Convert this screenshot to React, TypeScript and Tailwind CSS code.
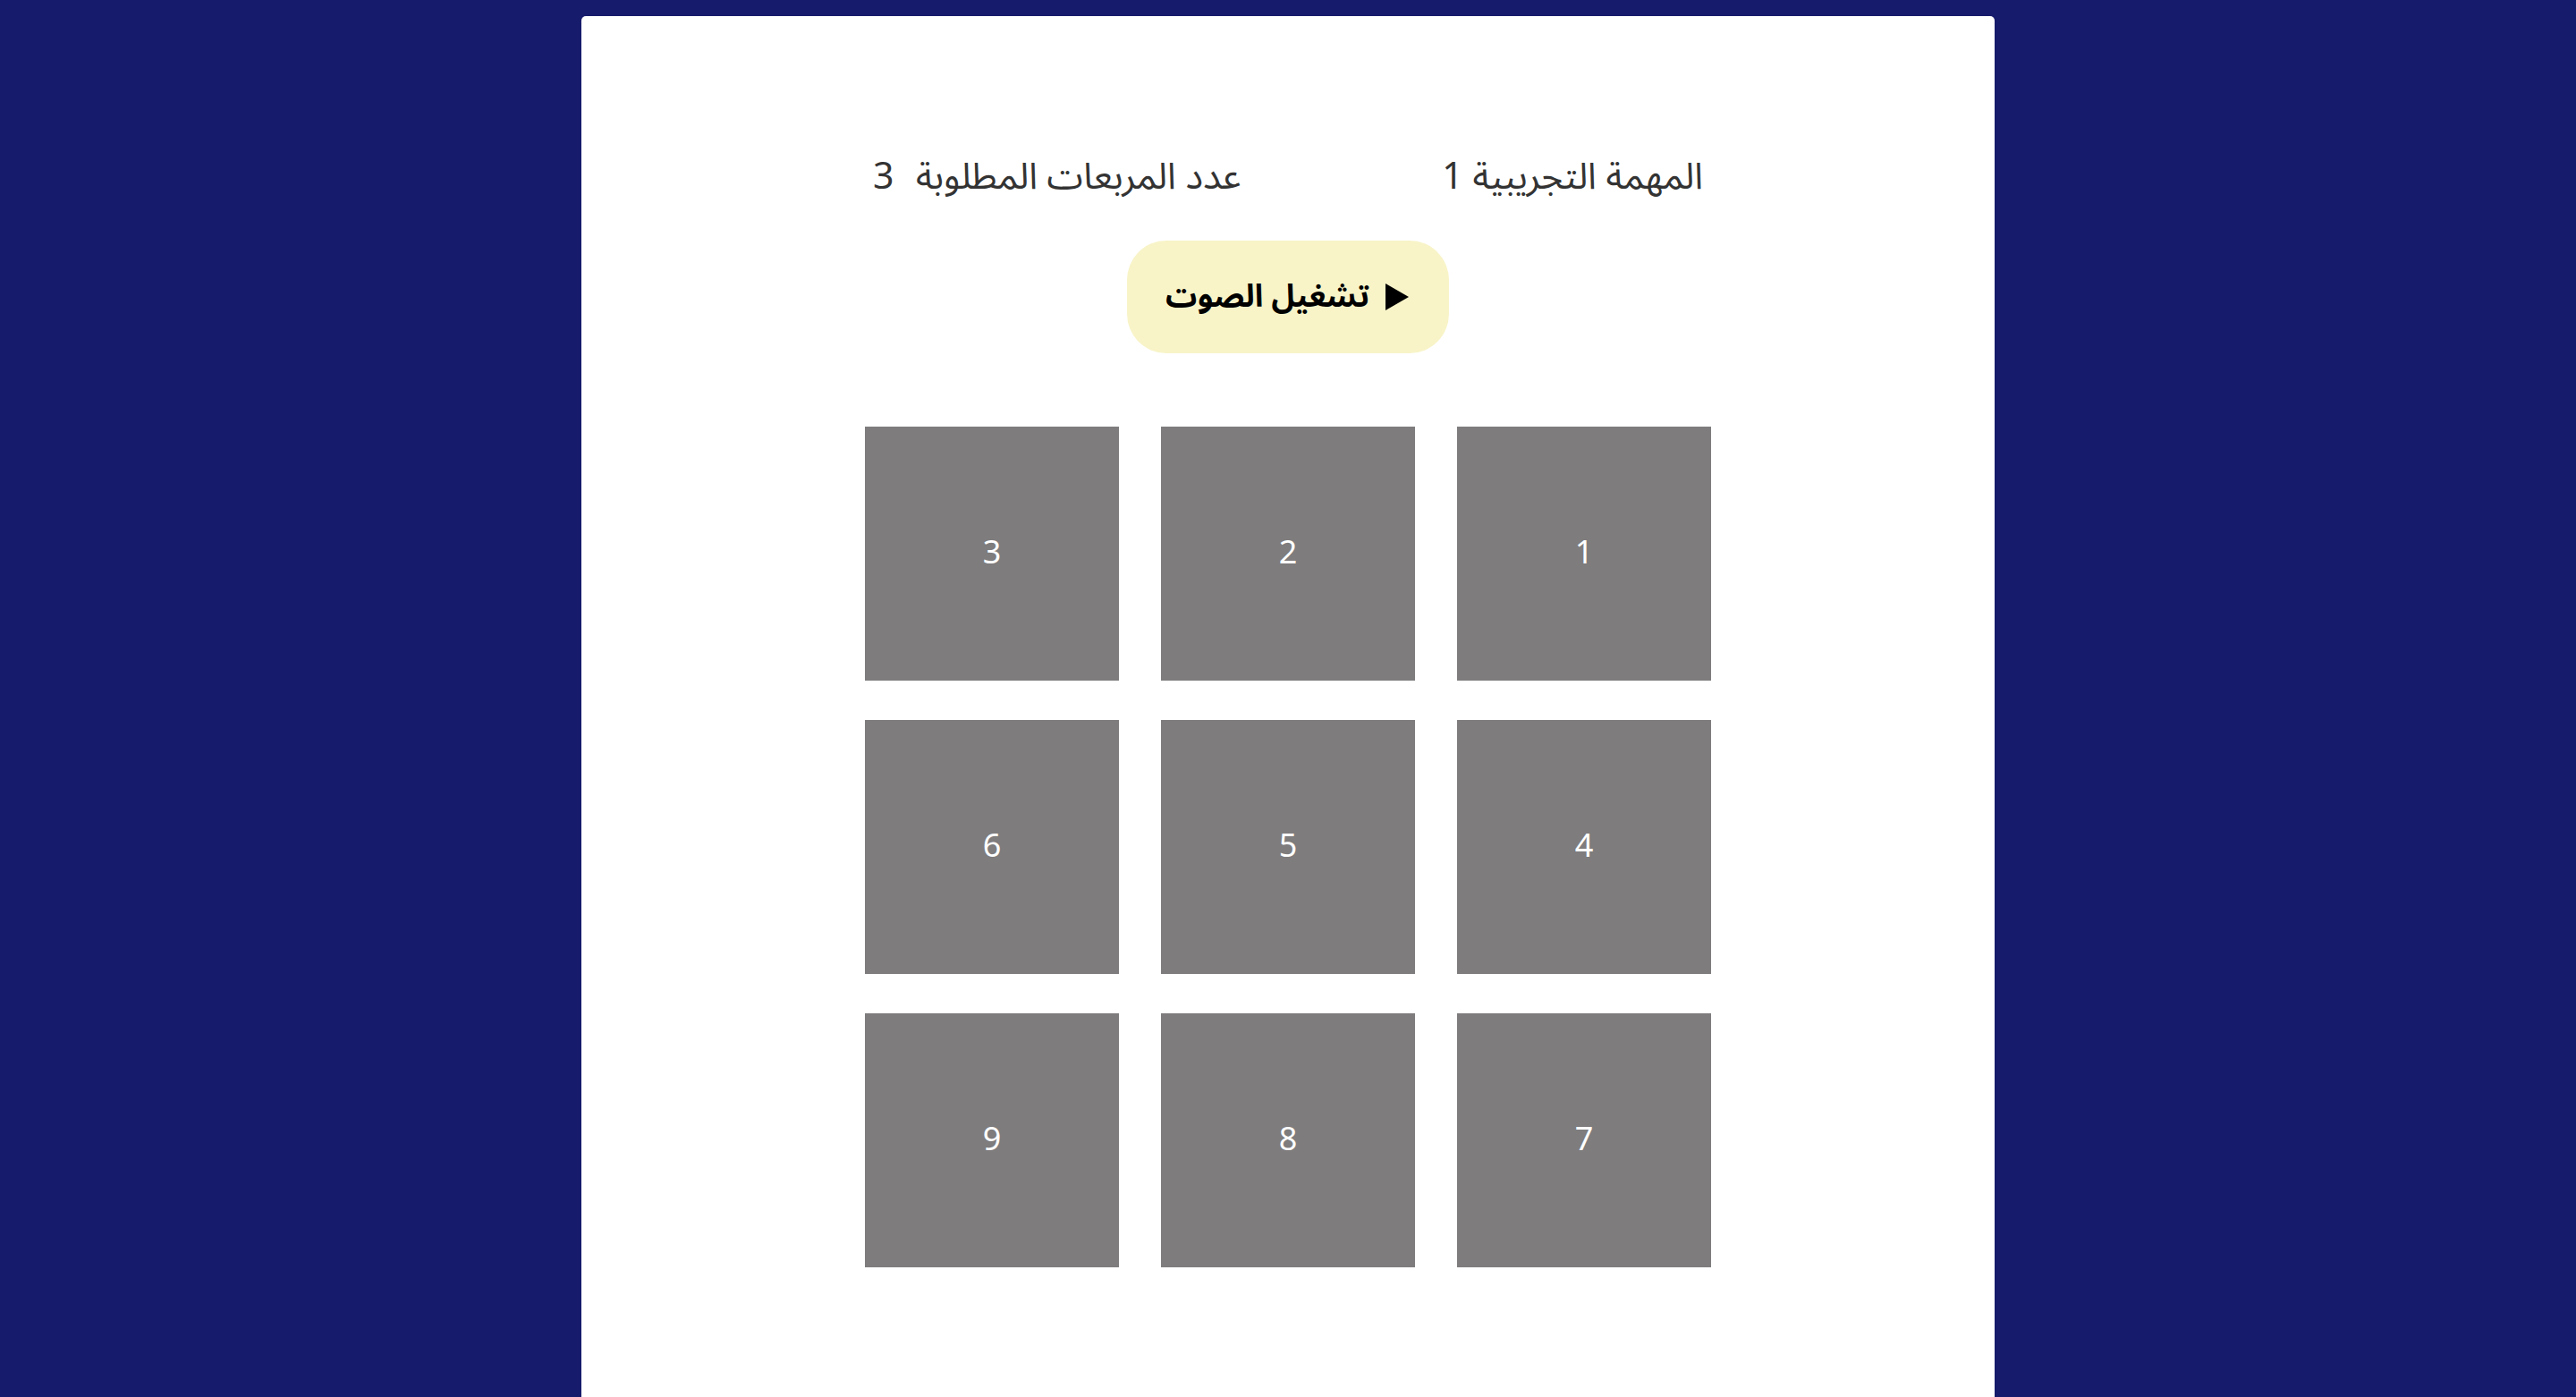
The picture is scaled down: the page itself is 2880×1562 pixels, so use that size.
import React from "react";

const squares = [1, 2, 3, 4, 5, 6, 7, 8, 9];

export default function App() {
    return (
        <div
            dir="rtl"
            className="h-screen overflow-hidden bg-[#171b6b] flex justify-center pt-[18px]"
            style={{ fontFamily: '"Noto Sans Arabic", "Noto Sans", "DejaVu Sans", sans-serif' }}
        >
            <div className="w-[1580px] bg-white rounded-t-[5px] flex flex-col items-center pt-[160px]">
                {/* Header */}
                <div className="w-[928px] flex justify-between items-center text-[41px] leading-none text-[#333333]">
                    <span>المهمة التجريبية 1</span>
                    <span>
                        عدد المربعات المطلوبة <span className="mr-[14px]">3</span>
                    </span>
                </div>

                {/* Play button */}
                <button className="mt-[50px] w-[360px] h-[126px] rounded-[44px] bg-[#f8f4c8] flex items-center justify-center gap-[16px] text-black font-bold text-[35px] leading-none">
                    <svg width="30" height="30" viewBox="0 0 30 30" className="shrink-0">
                        <path d="M2 0 L28 15 L2 30 Z" fill="#000" />
                    </svg>
                    <span>تشغيل الصوت</span>
                </button>

                {/* Grid */}
                <div className="mt-[82px] grid grid-cols-3 gap-x-[47px] gap-y-[44px]">
                    {squares.map((n) => (
                        <div
                            key={n}
                            className="w-[284px] h-[284px] bg-[#7e7c7d] flex items-center justify-center text-white text-[36px] leading-none"
                        >
                            {n}
                        </div>
                    ))}
                </div>
            </div>
        </div>
    );
}
